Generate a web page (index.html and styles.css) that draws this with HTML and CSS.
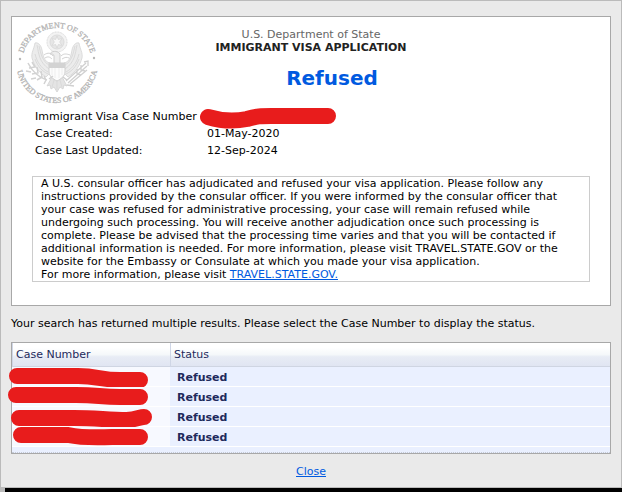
FILE: index.html
```html
<!DOCTYPE html>
<html lang="en">
<head>
  <meta charset="UTF-8">
  <meta name="viewport" content="width=device-width, initial-scale=1.0">
  <title>Visa Status</title>
  <link rel="stylesheet" href="styles.css">
</head>
<body>
  <main class="panel">
    <section class="card">
      <div class="header">
        <svg class="seal" viewBox="0 0 84 84" aria-hidden="true">
          <defs>
            <path id="arc-top" d="M7 43A35 35 0 0 1 77 43"/>
            <path id="arc-bottom" d="M1 42A41 41 0 0 0 83 42"/>
          </defs>
          <text class="seal-text"><textPath href="#arc-top" startOffset="50%" text-anchor="middle">DEPARTMENT OF STATE</textPath></text>
          <text class="seal-text"><textPath href="#arc-bottom" startOffset="50%" text-anchor="middle">UNITED STATES OF AMERICA</textPath></text>
          <circle cx="5" cy="39" r="1.2" fill="#b8b8b8"/>
          <circle cx="79" cy="38" r="1.2" fill="#b8b8b8"/>
          <!-- glory -->
          <circle cx="42" cy="22" r="10" fill="#f3f3f3" stroke="#d6d6d6" stroke-dasharray="1 .6"/>
          <circle cx="42" cy="22" r="7" fill="#e6e6e6" stroke="#dcdcdc"/>
          <path d="M42 16l1.3 3.5 3.6-.8-2.3 3.3 2.3 3.3-3.6-.8L42 28l-1.3-3.5-3.6.8 2.3-3.3-2.3-3.3 3.600.8z" fill="#f8f8f8" stroke="#d0d0d0" stroke-width=".6"/>
          <!-- wings -->
          <g fill="#ececec" stroke="#d4d4d4" stroke-width=".8">
            <path d="M35 43C29 42 28 35 27 30C26 25 23 22 20 23C19 29 16 33 17 38C19 45 23 52 31 57L36 52z"/>
            <path d="M49 43C55 42 56 35 57 30C58 25 61 22 64 23C65 29 68 33 67 38C65 45 61 52 53 57L48 52z"/>
            <path d="M22 25c2 9 2 17 12 24M20 34c2 8 6 14 13 18M20 39c3 8 7 12 13 15M24 26c2 8 3 15 11 20M62 25c-2 9-2 17-12 24M64 34c-2 8-6 14-13 18M64 39c-3 8-7 12-13 15M60 26c-2 8-3 15-11 20" fill="none"/>
          </g>
          <!-- head and scroll -->
          <path d="M39 44V36c0-2-2-2-4-2 1-3 7-4 10 0v10" fill="#eee" stroke="#cecece"/>
          <path d="M29 35c4-3 7-2 9 1M46 36c3-3 6-2 9-1M30 38c3-2 5-1 7 1M47 39c3-2 5-2 7-1" fill="none" stroke="#d2d2d2"/>
          <!-- tail -->
          <path d="M38 55l-6 11 3-1 1 4 3-2 3 5 3-5 3 2 1-4 3 1-6-11z" fill="#e4e4e4" stroke="#d2d2d2" stroke-width=".8"/>
          <path d="M40 57l-3 10M42 57v13M44 57l3 10" stroke="#d6d6d6" stroke-width=".7"/>
          <!-- shield -->
          <path d="M34 43h16v9c0 4-4 7-8 9-4-2-8-5-8-9z" fill="#fcfcfc" stroke="#d0d0d0"/>
          <path d="M34 43h16v5H34z" fill="#d3d3d3"/>
          <path d="M37 48v7M40 48v10M44 48v10M47 48v7" stroke="#eee"/>
          <!-- olive branch -->
          <path d="M13 43c4 8 9 14 19 17M14 48l6-1-3-5M17 54l6-1-1-6M22 60l5-3-1-6M29 64l2-4-2-4M11 51l5 1M16 59l5-1M34 59l4-3" fill="none" stroke="#d2d2d2" stroke-width="1.5"/>
          <!-- arrows -->
          <path d="M48 57l4 3M51 61l20-18M53 63l19-17M55 64l17-14M66 45v5l4 1M62 49v5l4 1M52 65l7 1M69 42l4-1v5" fill="none" stroke="#d0d0d0" stroke-width="1.3"/>
        </svg>
        <div class="titles">
          <p class="department">U.S. Department of State</p>
          <h1>IMMIGRANT VISA APPLICATION</h1>
          <p class="status">Refused</p>
        </div>
      </div>

      <dl class="details">
        <dt>Immigrant Visa Case Number</dt>
        <dd>
          <svg class="mark mark-detail" viewBox="0 0 140 24" role="img" aria-label="Hidden case number"><path d="M9 9C19 12 34 14 48 11C58 8 62 8 72 8H129"/></svg>
        </dd>
        <dt>Case Created:</dt>
        <dd>01-May-2020</dd>
        <dt>Case Last Updated:</dt>
        <dd>12-Sep-2024</dd>
      </dl>

      <div class="message">
        A U.S. consular officer has adjudicated and refused your visa application. Please follow any instructions provided by the consular officer. If you were informed by the consular officer that your case was refused for administrative processing, your case will remain refused while undergoing such processing. You will receive another adjudication once such processing is complete. Please be advised that the processing time varies and that you will be contacted if additional information is needed. For more information, please visit TRAVEL.STATE.GOV or the website for the Embassy or Consulate at which you made your visa application.<br>
        For more information, please visit <a href="#">TRAVEL.STATE.GOV.</a>
      </div>
    </section>

    <p class="note">Your search has returned multiple results. Please select the Case Number to display the status.</p>

    <div class="results">
      <table class="table">
        <thead>
          <tr>
            <th class="col-case">Case Number</th>
            <th>Status</th>
          </tr>
        </thead>
        <tbody>
          <tr>
            <td><svg class="mark" viewBox="0 0 140 20" role="img" aria-label="Hidden case number"><path d="M5 9H66C86 9 88 13 108 13H128"/></svg></td>
            <td>Refused</td>
          </tr>
          <tr>
            <td><svg class="mark" viewBox="0 0 140 20" role="img" aria-label="Hidden case number"><path d="M4 8H64C86 8 88 10 108 10H128"/></svg></td>
            <td>Refused</td>
          </tr>
          <tr>
            <td><svg class="mark" viewBox="0 0 140 20" role="img" aria-label="Hidden case number"><path d="M7 11H62C84 11 96 13 115 13C125 12 128 10 132 10"/></svg></td>
            <td>Refused</td>
          </tr>
          <tr>
            <td><svg class="mark" viewBox="0 0 140 20" role="img" aria-label="Hidden case number"><path d="M9 8H56C66 10 78 11 100 10H128"/></svg></td>
            <td>Refused</td>
          </tr>
        </tbody>
      </table>
      <div class="results-footer"></div>
    </div>

    <div class="footer">
      <a href="#">Close</a>
    </div>
  </main>
  <div class="edge"></div>
</body>
</html>
```
FILE: styles.css
```css
* {
  box-sizing: border-box;
}
body {
  margin: 0;
  background: #000;
  color: #000;
  font-family: Verdana, "DejaVu Sans", sans-serif;
  font-size: 11px;
  line-height: 13px;
}
p,
h1,
dl,
dd {
  margin: 0;
}
a {
  color: #005ae0;
}
.panel {
  padding: 15px 10px 9px;
  border: 1px solid #bbb;
  background: #eaeaea;
}
.card {
  padding: 3px 20px 23px;
  border: 1px solid #a8a8a8;
  background: #fff;
}
.header {
  display: grid;
  grid-template-columns: 84px 1fr 84px;
  margin: 0 -17px;
}
.seal {
  width: 84px;
  height: 84px;
}
.seal-text {
  font-family: "Liberation Serif", serif;
  font-size: 8px;
  fill: #b4b4b4;
  stroke: #b4b4b4;
  stroke-width: .3;
}
.titles {
  padding-top: 8px;
  text-align: center;
}
.department {
  color: #666;
}
.titles h1 {
  color: #222;
  font-size: 11px;
  line-height: 13px;
}
.status {
  margin-top: 12px;
  padding-left: 42px;
  color: #005ae0;
  font-size: 20px;
  font-weight: bold;
  line-height: 24px;
}

/* case details */
.details {
  display: grid;
  grid-template-columns: 172px 1fr;
  margin-top: 4px;
  padding-left: 3px;
  line-height: 17px;
}
.details dt {
  white-space: nowrap;
}
.details dd {
  position: relative;
}
.message {
  margin-top: 17px;
  padding: 0 24px 0 8px;
  border: 1px solid #ccc;
}
.note {
  margin: 11px 0 12px;
}

/* results */
.results {
  border: 1px solid #a8a8a8;
}
.table {
  width: 100%;
  table-layout: fixed;
  border-collapse: separate;
  border-spacing: 0;
  color: #1e2a5c;
}
.table th {
  height: 24px;
  padding: 0 3px;
  border-left: 1px solid #cfd6e6;
  border-bottom: 1px solid #cfd5e2;
  background: linear-gradient(#fff 20%, #f5f8fa 50%, #e8ecf5 60%, #e0e5f2);
  font-weight: normal;
  text-align: left;
}
.table .col-case {
  width: 158px;
}
.table td {
  position: relative;
  height: 20px;
  padding: 2px 7px 0;
  border-bottom: 1px solid #fff;
  background: #eaf0ff;
  font-weight: bold;
}
.table td:first-child {
  background: #f7f9ff;
}
.results-footer {
  height: 6px;
  border-bottom: 1px dotted #c5cbd8;
  background: #eaf0ff;
}

/* marker strokes over the case numbers */
.mark {
  position: absolute;
  top: 0;
  left: 0;
  width: 140px;
  height: 20px;
  overflow: visible;
}
.mark-detail {
  left: -8px;
  height: 24px;
}
.mark path {
  fill: none;
  stroke: #e81c1c;
  stroke-width: 16px;
  stroke-linecap: round;
}
.footer {
  padding-top: 11px;
  text-align: center;
}
.edge {
  height: 4px;
  border-left: 5px solid #bbb;
}
```
